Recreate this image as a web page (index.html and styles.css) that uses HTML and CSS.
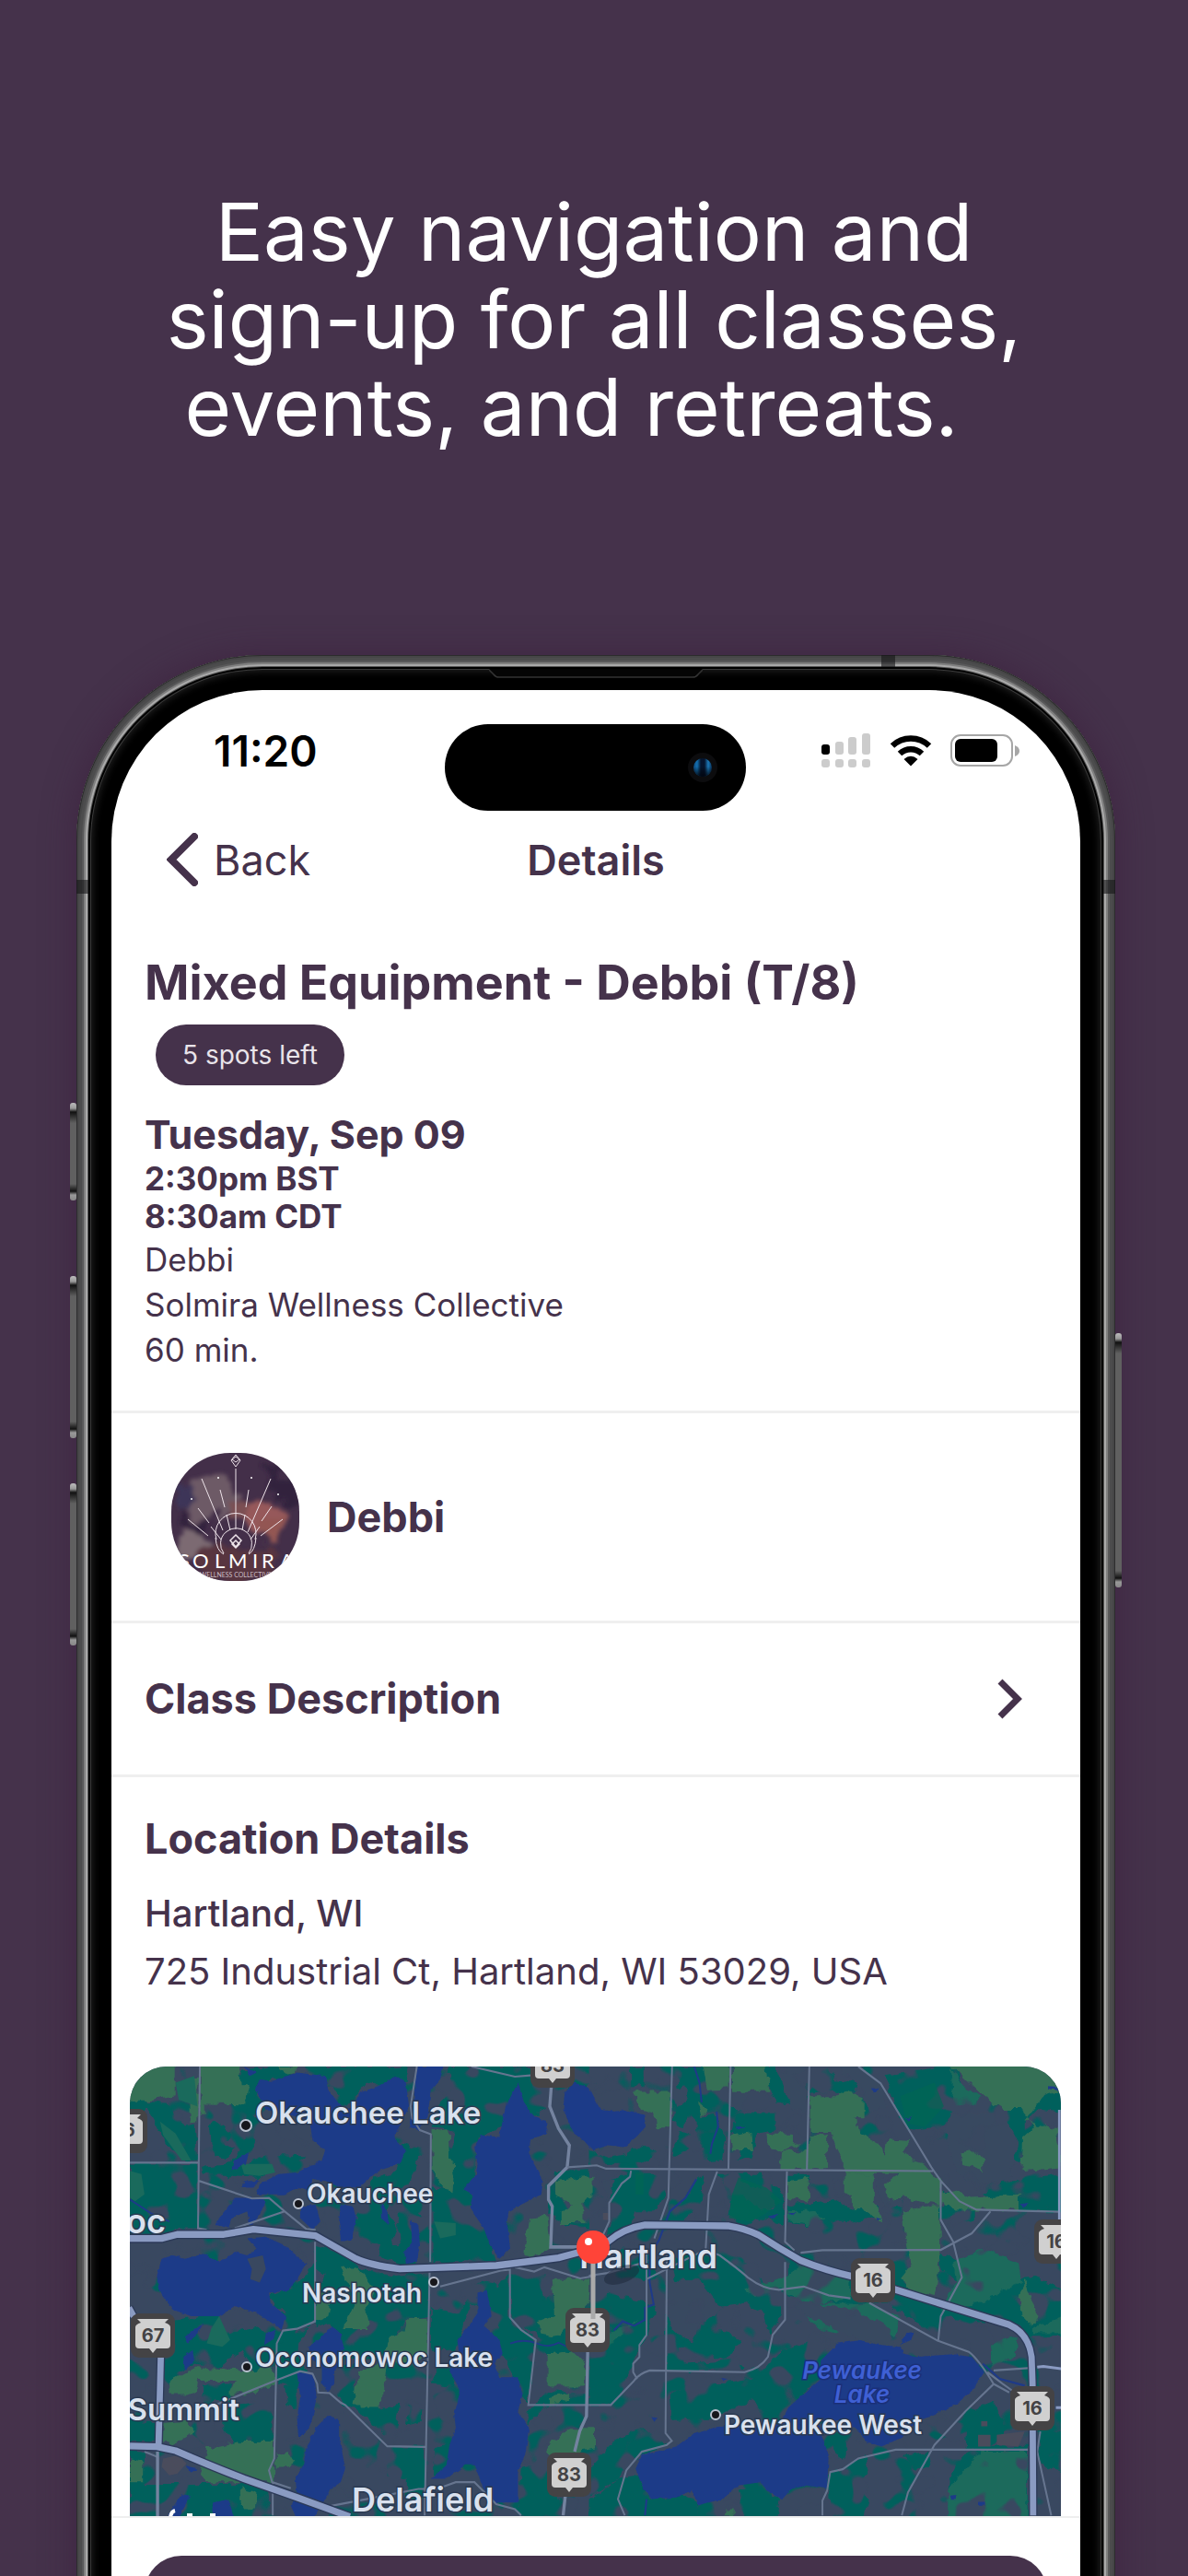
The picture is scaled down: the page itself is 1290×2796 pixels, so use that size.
FILE: index.html
```html
<!DOCTYPE html>
<html lang="en">
<head>
  <meta charset="UTF-8">
  <meta name="viewport" content="width=device-width, initial-scale=1">
  <title>Class Details | Solmira</title>
  <link rel="stylesheet" href="styles.css">
</head>
<body>
  <main class="page">
    <h1 class="headline">Easy navigation and<br>sign-up for all classes,<br>events, and retreats.&nbsp;&nbsp;</h1>

    <div class="phone">
      <span class="side-button action"></span>
      <span class="side-button volume-up"></span>
      <span class="side-button volume-down"></span>
      <span class="side-button power"></span>
      <span class="antenna antenna-top"></span>
      <span class="antenna antenna-left"></span>
      <span class="antenna antenna-right"></span>
      <svg class="speaker" viewBox="0 0 232 10"><path d="M0 0H232L227 6Q225 9 221 9H11Q7 9 5 6Z" fill="#050505"/><path d="M0 1L5 6Q7 9 11 9H221Q225 9 227 6L232 1" fill="none" stroke="#333" stroke-width="1.5"/></svg>

      <div class="screen">
        <div class="status-bar">
          <span class="time">11:20</span>
          <div class="island">
            <svg width="34" height="34" viewBox="0 0 34 34">
              <defs>
                <linearGradient id="lens"><stop offset="0" stop-color="#0d4a80"/><stop offset=".2" stop-color="#1470b0"/><stop offset=".4" stop-color="#04142e"/><stop offset=".6" stop-color="#04142e"/><stop offset=".8" stop-color="#1c78b8"/><stop offset="1" stop-color="#083058"/></linearGradient>
                <linearGradient id="lensShade" x2="0" y2="1"><stop offset=".45" stop-color="#000" stop-opacity="0"/><stop offset="1" stop-color="#000510" stop-opacity=".9"/></linearGradient>
              </defs>
              <circle cx="17" cy="17" r="16" fill="#0c0c0e"/>
              <circle cx="17" cy="17" r="10" fill="url(#lens)"/>
              <circle cx="17" cy="17" r="10" fill="url(#lensShade)"/>
            </svg>
          </div>
          <div class="status-icons">
            <svg width="54" height="38" viewBox="0 0 54 38">
              <rect x="0" y="12" width="9" height="11" rx="3"/>
              <g fill="#ccc">
                <rect x="15" y="9" width="9" height="14" rx="3"/>
                <rect x="29" y="4" width="9" height="19" rx="3"/>
                <rect x="44" y="0" width="9" height="23" rx="3"/>
                <rect x="0" y="28" width="9" height="9" rx="3"/>
                <rect x="15" y="28" width="9" height="9" rx="3"/>
                <rect x="29" y="28" width="9" height="9" rx="3"/>
                <rect x="44" y="28" width="9" height="9" rx="3"/>
              </g>
            </svg>
            <svg width="46" height="34" viewBox="0 0 46 34">
              <path d="M3 11.500A29 29 0 0 1 43 11.500M11 20A17.500 17.500 0 0 1 35 20" fill="none" stroke="#000" stroke-width="6.500"/>
              <path d="M23 33.500L15.500 26Q23 19.500 30.500 26Z"/>
            </svg>
            <svg width="75" height="36" viewBox="0 0 75 36">
              <rect x="1" y="1" width="66" height="33" rx="10" fill="#fff" stroke="#a6a6a6" stroke-width="2"/>
              <rect x="5" y="5" width="46" height="25" rx="6"/>
              <path d="M70 12Q75 14 75 18T70 24Z" fill="#a6a6a6"/>
            </svg>
          </div>
        </div>

        <nav class="nav-bar">
          <a class="back" href="#">
            <svg width="34" height="58" viewBox="0 0 34 58"><path d="M30 4L5 29L30 54" fill="none" stroke="currentColor" stroke-width="8" stroke-linecap="round" stroke-linejoin="miter"/></svg>
            Back
          </a>
          <h2 class="nav-title">Details</h2>
        </nav>

        <section class="summary">
          <h2 class="class-name">Mixed Equipment - Debbi (T/8)</h2>
          <span class="spots">5 spots left</span>
          <p class="date">Tuesday, Sep 09</p>
          <p class="hours">2:30pm BST<br>8:30am CDT</p>
          <p class="facts">Debbi<br>Solmira Wellness Collective<br>60 min.</p>
        </section>

        <section class="teacher">
          <svg class="avatar" viewBox="0 0 139 139">
            <defs>
              <filter id="soft" x="-20%" y="-20%" width="140%" height="140%">
                <feTurbulence type="fractalNoise" baseFrequency=".05" numOctaves="3" seed="4"/>
                <feDisplacementMap in="SourceGraphic" scale="26" xChannelSelector="R" yChannelSelector="G"/>
                <feGaussianBlur stdDeviation="2"/>
              </filter>
            </defs>
            <rect width="139" height="139" fill="#432f49"/>
            <g filter="url(#soft)">
              <path d="M22 30Q40 18 60 26T64 60L40 78L14 62Z" fill="#6d5a66"/>
              <path d="M4 92L30 84L48 98L40 116L6 108Z" fill="#7c6a72"/>
              <path d="M82 56L104 50L128 74L116 88L90 90Z" fill="#96585a"/>
              <path d="M4 40L24 36L20 60L4 66Z" fill="#3c3558"/>
              <path d="M100 10L136 30L134 66L112 50Z" fill="#33223d"/>
              <path d="M28 104L108 100L118 139H30Z" fill="#59343f"/>
              <path d="M10 66L40 76L30 86L8 84Z" fill="#33243c"/>
              <path d="M62 52L88 58L84 74L60 72Z" fill="#7c5053"/>
              <path d="M96 70L122 72L116 96L98 92Z" fill="#935752"/>
            </g>
            <g fill="none" stroke="#eee4ea" stroke-width="1">
              <path d="M70 17V83M33 28L56 84M108 28L83 86M53 40L58 59M84 40L81 59M29 60L41 76M109 58L98 74M18 72L40 90M121 72L97 90M60 67L64 84M80 67L77 84M43 80L54 94M96 80L86 94"/>
              <path d="M49 94A22 22 0 1 1 91 94M57 109A17 17 0 1 1 84 109M48 92Q49 106 57 110M92 92Q91 106 84 110"/>
              <path d="M70 2L75 8L70 15L65 8ZM70 4L74 7L70 10L66 7Z"/>
              <path d="M70 89L76 95L70 102L64 95ZM70 95L74 99L70 103L66 99Z" stroke-width="1.500"/>
            </g>
            <g fill="#fff"><circle cx="51" cy="27" r="1"/><circle cx="87" cy="27" r="1"/><circle cx="116" cy="45" r="1"/><circle cx="22" cy="50" r="1"/></g>
            <text class="avatar-name" y="125" x="8 23 47 62 88 98 118">SOLMIRA</text>
            <text class="avatar-sub" x="70" y="135" text-anchor="middle">WELLNESS COLLECTIVE</text>
          </svg>
          <h3 class="section-title">Debbi</h3>
        </section>

        <a class="description" href="#">
          <span class="section-title">Class Description</span>
          <svg width="28" height="44" viewBox="0 0 28 44"><path d="M3 3L22 22L3 41" fill="none" stroke="currentColor" stroke-width="7"/></svg>
        </a>

        <section class="location">
          <h3 class="section-title">Location Details</h3>
          <address>
            <p class="city">Hartland, WI</p>
            <p>725 Industrial Ct, Hartland, WI 53029, USA</p>
          </address>
        </section>

        <svg class="map" viewBox="0 0 1011 488" preserveAspectRatio="xMidYMin slice" role="img" aria-label="Map of Hartland">
          <defs>
            <g id="shield">
              <rect x="-24" y="-24" width="48" height="48" rx="9" fill="#444345"/>
              <path d="M-17 -18H17L13 -14Q19 -12 19 -9V10Q19 14 15 14H4L0 19L-4 14H-15Q-19 14 -19 10V-9Q-19 -12 -13 -14Z" fill="#d0d0d0"/>
            </g>
            <!-- ragged field and shore edges -->
            <filter id="ragged" x="0" y="0" width="100%" height="100%">
              <feTurbulence type="fractalNoise" baseFrequency=".035" numOctaves="2" seed="7"/>
              <feDisplacementMap in="SourceGraphic" scale="26" xChannelSelector="R" yChannelSelector="G"/>
            </filter>
            <filter id="shore" x="0" y="0" width="100%" height="100%">
              <feTurbulence type="fractalNoise" baseFrequency=".06" numOctaves="2" seed="3"/>
              <feDisplacementMap in="SourceGraphic" scale="10" xChannelSelector="R" yChannelSelector="G"/>
            </filter>
            <!-- scattered small fields -->
            <filter id="fields" x="0" y="0" width="100%" height="100%" color-interpolation-filters="sRGB">
              <feTurbulence type="fractalNoise" baseFrequency=".03 .034" numOctaves="2" seed="12"/>
              <feColorMatrix values="0 0 0 0 0  0 0 0 0 0  0 0 0 0 0  14 0 0 0 -8.300"/>
              <feComposite in="SourceGraphic" operator="in"/>
            </filter>
            <filter id="groves" x="0" y="0" width="100%" height="100%" color-interpolation-filters="sRGB">
              <feTurbulence type="fractalNoise" baseFrequency=".028 .032" numOctaves="2" seed="31"/>
              <feColorMatrix values="0 0 0 0 0  0 0 0 0 0  0 0 0 0 0  14 0 0 0 -8.300"/>
              <feComposite in="SourceGraphic" operator="in"/>
            </filter>
            <path id="highway" d="M63 570H165L215 558H365L460 543L660 562L790 630Q830 648 930 660L1240 650L1440 627L1530 605L1598 580Q1650 540 1718 530L1988 533Q2040 540 2083 560Q2150 600 2218 635Q2300 665 2388 683L2888 825Q2950 850 2960 920L2963 1000L2965 1388M63 1183L150 1185L210 1197Q330 1245 430 1280L600 1335L770 1392M163 900L155 1185M60 775L75 800"/>
          </defs>
          <rect width="1011" height="488" fill="#394860"/>
          <rect width="1011" height="488" fill="#00605c" filter="url(#groves)"/>
          <g transform="matrix(.338 0 0 .3674 -21.3 -22.8)">
            <!-- woodland -->
            <g fill="#00605c" filter="url(#ragged)">
              <path d="M63 350L280 348V540H230L180 560L63 560ZM110 165L180 170L240 240L272 235L280 345L250 340L190 300L120 190ZM63 160L110 160L130 180L100 200L63 190Z"/>
              <path d="M440 190L475 215L465 290L440 330L400 340L390 385L380 390L395 335L430 290ZM290 355L440 345L520 320L630 325L600 345L530 360L500 390L420 385L300 380ZM320 235L350 225L370 250L390 265L365 290L400 300L375 335L340 325L325 290Z"/>
              <path d="M420 75L520 62H960L950 110L900 120L820 110L760 180L720 120L600 90L520 100L440 180L420 130Z"/>
              <path d="M1090 62H1350L1410 130L1400 190L1180 270L1170 380L1150 430L1210 520L1240 640H1035V420L1100 425V255L1080 245L1035 240L1060 170L1090 140Z"/>
              <path d="M940 290L1015 310L985 350L960 410L900 430L890 480L920 540L900 595L800 580L790 480L820 430L850 390L920 370Z"/>
              <path d="M920 490L960 480L1025 520V640L940 645L860 625L870 590L930 590Z"/>
              <path d="M660 590L740 610L800 660L920 680L1025 670V800L960 810L920 850L880 930L760 920L740 860L700 820L660 830V720L690 680L660 660ZM500 740L600 710L655 640V815L610 840L550 860L500 800L560 790Z"/>
              <path d="M1030 770L1120 790L1180 700L1250 710L1280 670V800L1350 850L1370 880L1340 1060L1250 900L1240 800L1160 760L1110 900H1030Z"/>
              <path d="M1285 670H1400L1390 760L1440 720L1480 780V900L1410 930L1380 860L1290 800Z"/>
              <path d="M180 820L290 800L330 770L380 850L480 830L535 880L530 950L460 960L420 900L350 950L270 940L190 980ZM300 1000H390V1050H330L300 1080ZM360 1070L520 1050V1180L410 1190L360 1130Z"/>
              <path d="M640 830L600 900L640 980L600 1010L540 1000L545 880ZM740 950L800 940L780 1010L870 1070L930 1060L920 1130L880 1150L830 1100L750 1060L720 1000Z"/>
              <path d="M890 1185H1010V1340H950V1280L890 1270ZM1040 1190L1110 1170L1090 1250L1040 1270ZM960 1060L1005 1070L1000 1110L950 1120ZM1050 960L1110 940L1100 1005L1030 1000ZM1340 1080L1410 1020L1530 1030V1060H1400L1340 1120Z"/>
              <path d="M63 1195L110 1200L100 1290H63ZM63 1295H500L520 1400H63ZM1320 1245L1400 1235L1410 1310L1450 1340V1400H1250L1310 1360ZM63 1115H150V1170H63ZM200 1110L250 1140L220 1160ZM560 1010L595 1000L600 1070L570 1060ZM1470 52L1538 52V110L1500 180L1470 150ZM1430 370L1538 365V540L1470 530L1410 500L1415 420Z"/>
            </g>
            <g transform="translate(1538 0)">
              <g fill="#00605c" filter="url(#ragged)">
                <path d="M280 62H370L380 130L360 210L400 200L440 270L430 340L390 345L370 300L340 290L350 230L320 200L300 240L270 220L290 150ZM500 62H600L650 120V175L600 170L580 120L480 90ZM135 62H175V120H135ZM480 200H600V250L540 260L520 330L480 340L490 290L450 250ZM0 310L60 330L110 320L180 290L220 320L170 350L0 350ZM290 255L330 262L335 300L270 330L280 280Z"/>
                <path d="M50 410L110 380H240L250 450L210 490L150 490L130 545L60 560L80 480ZM410 380H550L625 440V530L560 510L500 530L450 500L460 430ZM340 400L370 380L360 470L300 520L240 530L300 460ZM640 380H710V400H640Z"/>
                <path d="M640 470L800 460L840 480L930 480L930 500L850 520L740 515L700 530L640 525ZM705 140L760 52L790 100L870 110L850 150L780 135ZM950 90L1180 52L1200 130L1140 240L1020 250L980 180ZM1350 140L1440 100L1520 140V200L1440 190L1400 230V350L1370 340L1340 230ZM1140 430L1180 440L1240 470V520L1140 500ZM1380 400L1520 380V490H1380L1260 440L1330 400ZM760 170H800V210H740Z"/>
                <path d="M60 730L220 770L180 860L130 960L90 1060H0V900L70 870ZM100 600H180L220 680L180 700L110 660ZM260 640L330 610L500 640L560 700L620 720V800L580 850L560 790L500 760L420 770L360 700L280 690ZM250 800L290 820L280 870L330 880L290 900L310 940L470 930L500 960H250ZM360 830L450 850L490 870L440 930L360 900Z"/>
                <path d="M640 600L750 640L840 690L1000 700L1080 760L1250 760L1280 700L1430 680L1520 720V860L1430 860L1380 830L1130 800L1100 850L960 760L800 760L640 740ZM1130 610L1190 640V700L1130 660ZM1200 720L1330 700L1320 720L1200 730Z"/>
                <path d="M260 1030L330 990L420 1000L540 980L620 900L700 880L770 910L780 950L620 1090L560 1080L520 1050L400 1100L270 1110ZM170 1130L260 1180L200 1200L110 1240L100 1280L0 1330V1250L90 1160ZM100 1280L170 1270L190 1340L310 1330L350 1350V1400H0V1340ZM770 1130L830 1180L820 1230L790 1210ZM770 1270L890 1210L900 1260L850 1290L900 1340L880 1400H780ZM1010 1210L1090 1200L1100 1240L1050 1250ZM1180 1240L1240 1180H1410V1400H1150L1160 1280ZM1220 1080L1300 1050L1340 1130L1330 1160L1270 1190H1210ZM1440 1130L1520 1140V1260L1450 1240ZM480 1310L560 1300L610 1340L600 1400H500Z"/>
              </g>
              <g fill="#1a6a5c" filter="url(#ragged)">
                <path d="M500 720L640 680L700 640L840 690V750L700 760L620 720L530 740ZM740 840L800 850L840 800L980 860L1000 800L900 760H640L620 720ZM1170 640L1260 600L1380 640L1390 700L1230 770L1130 780L1180 700ZM1160 52L1200 120L1260 150L1230 180H1160L1170 120ZM1430 830L1520 800V850H1430ZM1290 880L1380 860L1370 920L1300 950ZM1180 1280L1260 1200H1408V1400H1150V1320ZM640 490L700 485L760 510L700 528L640 520ZM0 880L160 810L60 890L0 900ZM1200 260L1260 290V340L1210 310Z"/>
              </g>
              <path d="M270 130L310 120L320 160L280 190ZM480 80L530 130L500 190H450L460 110ZM600 62L700 62V200L650 190ZM1160 200L1330 200L1380 290L1350 400L1250 410L1180 380L1140 250ZM800 62H870L940 110L960 180L900 200L880 130ZM80 400L60 470L40 390ZM250 700L350 690L430 780L350 830L330 880L260 830ZM640 750L840 780L960 830L980 890L870 870L700 800ZM920 400L960 390L1010 470L950 480ZM480 400L560 430L600 470L560 490L490 440Z" fill="#394860" filter="url(#ragged)"/>
            </g>
          </g>
          <rect width="1011" height="488" fill="#394860" filter="url(#fields)"/>
          <g transform="matrix(.338 0 0 .3674 -21.3 -22.8)">
            <!-- parks -->
            <g fill="#357057" filter="url(#ragged)">
              <path d="M75 52L210 54V150L120 165L63 165V110ZM290 54H415L420 120H450L435 175L305 172V200H290ZM257 95H283V230H257ZM540 64H610L600 80L570 85ZM1035 250L1085 245L1090 340L1105 345L1100 430L1070 420L1035 370Z"/>
              <path d="M740 650L800 665L850 720L820 780L830 835H750L770 790L790 750L760 700ZM660 730L715 740L700 800L660 815ZM960 805H1020V910L990 935L890 930L870 1065H780L800 960L860 940L910 860L950 840Z"/>
              <path d="M180 1010L200 990L280 950L440 960L525 950V1000L440 1030L380 1030L400 990H280L270 1030H190ZM170 1115L240 1110L270 1140L230 1160L200 1180L165 1170ZM310 1190L420 1170L525 1170V1290H310L290 1270ZM530 1210L570 1200L590 1230L560 1245H530ZM63 1220L105 1230V1290H63ZM420 1305L470 1320L465 1370L430 1370L415 1340Z"/>
              <path d="M1345 510L1405 505L1415 600L1370 625L1325 620ZM1430 400L1550 385V440L1520 470V525L1450 525V495L1480 470L1430 440ZM1405 910L1480 900L1525 940V1005H1405ZM1420 690L1540 690V740L1530 770L1440 860L1380 850L1375 820L1430 800ZM1410 1040L1480 1025L1480 1050L1410 1060ZM1410 1175L1480 1130H1560V1190L1500 1200L1460 1240L1400 1200Z"/>
            </g>
            <g fill="#1a6a5c">
              <path d="M160 225L210 260L260 340L230 340L170 265ZM63 370L100 380L110 440L80 460L63 450ZM270 90L280 180L220 160L210 110ZM420 350L520 350L530 375L480 385L430 380ZM1040 520L1110 525V560L1060 570ZM325 835L350 800L385 870L360 890L310 880Z"/>
            </g>
            <path d="M170 1220L220 1210L245 1235L215 1265L190 1270L165 1245Z" fill="#4a4c5c"/>
            <g transform="translate(1538 0)">
              <g fill="#357057" filter="url(#ragged)">
                <path d="M365 52H450V125L380 130ZM460 52H565L580 135H460ZM140 137H265V245H215L210 200L170 190ZM710 150H800L820 135L885 150V210H855L870 260L930 290L950 320L1080 350L1130 400V470L1060 460L1010 450L960 455L950 410L1000 380H820V345L790 290L780 255H710ZM710 270L765 260V365H615L620 310L705 315ZM960 275L1030 280L1010 310L1040 340L1020 360L950 320ZM455 270L520 255L525 310L460 310ZM570 260H655V285L685 290L620 310L575 300Z"/>
                <path d="M1160 52L1480 54L1520 130L1460 150L1400 220L1500 250L1520 360L1390 370L1395 270L1430 240L1390 190L1330 190L1270 150ZM1195 320L1240 310L1265 340V370L1200 350ZM1110 440L1180 430L1230 450L1380 440V485L1250 485H1180L1140 470ZM820 380L915 378V470L945 500L935 530L905 490L850 485L850 440H820ZM640 400L705 390V460L640 450ZM1010 490L1125 470L1130 620L1110 740L1020 720L1000 690L1035 650L1015 560ZM1400 690L1420 750L1450 800L1420 830L1390 800L1385 740Z"/>
                <path d="M350 170L380 190L365 210ZM440 1370L465 1370V1388H430Z"/>
              </g>
              <path d="M480 390L570 420L620 460L560 500L520 520L450 510L460 440ZM150 375H175V440H150ZM1000 150L1110 110L1140 180L1080 240L1020 230Z" fill="#006654" opacity=".7"/>
              <path d="M1250 1150H1290V1185H1250ZM1310 1150L1400 1140L1380 1185L1310 1180ZM45 495H62V515H45ZM1260 1110H1280V1125H1260Z" fill="#4a4c5c"/>
            </g>
            <!-- water -->
            <g fill="#1e3a88" filter="url(#shore)">
              <path d="M465 130L480 100L520 105L600 80L690 90L700 130L750 190L790 180L800 140L860 120L920 90L950 110L960 180L930 240L910 270L950 310L930 350L860 370L800 420L740 420L690 400L650 395L640 430L600 420L560 440L470 440L480 410L540 380L600 375L680 340L690 310L650 280L640 220L500 190Z"/>
              <path d="M985 62H1070L1060 100L1030 130L1020 210L990 250L960 240L975 160ZM430 62L470 80L450 90ZM400 340L445 315L435 350L390 370ZM350 510L400 450L470 450L500 460L480 500L450 540L440 490L390 510L380 540L340 530ZM430 400L480 400L460 420L425 420Z"/>
              <path d="M1310 110L1330 170L1350 200L1405 230L1400 260L1350 280L1345 320L1390 400L1385 440L1320 470L1280 490L1275 520L1285 600L1250 630L1220 590L1200 540L1155 480L1165 440L1135 425L1175 380L1180 350L1170 300L1190 265L1250 270L1270 180Z"/>
              <path d="M1460 140L1490 110L1540 125L1575 190L1620 195L1655 190L1715 205L1720 240L1690 270L1650 300L1600 295L1550 310L1520 280L1490 260L1455 190Z"/>
              <path d="M165 630L200 620L240 630L300 615L350 640L400 610L440 620L470 600L440 570L500 565L560 590L630 645L600 690L570 725L510 730L515 760L565 800L550 840L520 820L470 790L400 770L350 800L260 800L200 780L155 720L150 680Z"/>
              <path d="M740 470L780 475L790 510L775 575H740L735 520ZM965 515L990 530L995 590L985 640L950 645L945 610L970 580ZM610 475L660 470L675 520L650 545L610 510ZM870 465L890 490L895 530L870 510Z"/>
              <path d="M710 828L740 850L750 890L740 940L720 960V1000L700 1020L680 1000L680 950L640 920L635 890L670 870ZM600 965L650 970L665 1030L650 1100L640 1130L605 1160L600 1100L610 1040Z"/>
              <path d="M700 1092L735 1105L735 1160L745 1200L755 1250L740 1290L710 1310L690 1340L650 1400H600L580 1360L600 1330L595 1280L620 1240L630 1190L660 1130Z"/>
              <path d="M1180 730L1210 722L1225 800L1200 830L1250 870L1260 910L1235 935L1250 980L1310 980L1325 1030L1310 1080L1345 1130L1335 1200L1310 1260L1310 1350L1240 1350L1200 1310L1170 1240L1140 1240L1080 1280L1030 1280L1080 1240L1090 1180L1110 1130L1105 1090L1125 1020L1090 960L1120 910L1115 870L1150 830L1180 790Z"/>
              <path d="M265 900L270 930L240 960L235 920ZM330 1350L380 1340L400 1400H325ZM230 1325L255 1330L220 1400H175ZM240 1240L280 1250L260 1262ZM240 860L300 820L280 850L250 880ZM500 850L535 840L520 870L495 885Z"/>
            </g>
            <path d="M440 630L490 620L500 660L480 700L450 690L455 660Z" fill="#394860"/>
            <path d="M1285 880Q1330 865 1370 880T1440 878L1480 895M63 455L130 495L190 520" fill="none" stroke="#1e3a88" stroke-width="5"/>
            <g transform="translate(1538 0)">
              <g fill="#1e3a88" filter="url(#shore)">
                <path d="M745 930L800 880L860 872L940 885L1000 890L1010 910L1050 920L1170 912L1230 920L1270 965L1230 1020L1180 1060L1120 1085L1060 1110L1000 1160L940 1185L890 1170L870 1140L820 1110L750 1110L690 1125H610L640 1070L700 1020L740 990Z"/>
                <path d="M280 1185L330 1150L400 1130L440 1120L740 1120L755 1170L770 1210L765 1310L700 1300L650 1310L620 1342L580 1320L550 1290L480 1300L430 1340L350 1358L330 1315L280 1335L200 1340L170 1300L150 1250L170 1210Z"/>
                <path d="M1020 850L1045 845L1035 870L1000 885ZM910 125L930 130L915 140ZM1015 215L1038 212L1025 225ZM1385 468L1412 465L1395 480ZM575 505L610 497L590 512ZM640 495L665 495L655 502ZM1475 120L1505 122V132L1475 128ZM920 505L940 510L925 518ZM1160 1330L1180 1328L1178 1342H1160ZM1250 1348H1272V1360H1250ZM470 240L505 238L480 248ZM200 1098L220 1100L210 1112ZM425 982L445 985L435 994Z"/>
              </g>
              <path d="M338 62L355 110L362 168M410 195L415 240L395 290L390 320M345 395L310 450L260 490L225 575L195 620V700L208 765L180 775V810L145 828L108 815L80 842M185 1340L180 1388M1265 940L1320 985L1400 1005" fill="none" stroke="#1e3a88" stroke-width="6"/>
            </g>

            <!-- minor roads -->
            <g fill="none" stroke="#66758f" stroke-width="6">
              <path d="M288 62L282 540L310 545M63 346H282M285 400L455 452L510 450L560 490L630 542L660 545M400 540L560 490M658 580V815L600 837L555 842L535 880L527 1220L510 1255L520 1290L580 1308M522 1290V1388"/>
              <path d="M330 1065L530 990L610 962L650 970L665 1000L668 1025L705 1027L740 1055L755 1062L890 1184L1012 1186M1030 260L1028 640M1026 670L1010 1388M985 62L965 180L970 215L995 250L1030 262M1060 712L1255 665L1284 662V803L1320 840L1367 870L1343 1062H1538M1300 655L1362 668L1395 655L1510 688L1560 680M1160 62L1300 92L1350 88M710 1360L880 1330L990 1310H1050L1110 1290L1170 1290L1240 1355L1300 1370L1320 1388M110 1200L150 1215"/>
            </g>
            <path d="M1417 120L1412 180L1440 245L1475 295L1468 360L1408 415V455L1420 475L1415 595H1510M1534 900L1530 1095L1508 1140L1492 1200M1462 1330L1455 1388M152 1200V1400" fill="none" stroke="#74839f" stroke-width="10"/>
            <g transform="translate(1538 0)" fill="none" stroke="#66758f" stroke-width="6">
              <path d="M-70 360L25 354L55 364L1105 371M267 62L255 450L210 570M455 62L448 365M708 62L700 368M865 62L937 112L1100 360L1132 402L1190 460L1245 485L1513 491M636 372L630 580L660 605M135 370L132 388L105 408L65 465V520L45 560M412 372L385 440L375 600M1130 400V515L1170 580L1198 685L1130 800L1122 872M1290 490L1230 555L1130 604L750 605L680 612M185 690L375 603L420 620Q480 660 510 685Q560 720 610 722L690 712L770 738L840 747"/>
              <path d="M630 640V810L590 855L575 920Q550 955 500 965L195 960Q160 970 145 990L70 1062H0M185 610V855L162 885V920L142 940V965L155 985M250 620L246 1145L266 1168L250 1180L170 1200L120 1255L93 1340L115 1388M900 760L1120 872L1220 905Q1250 925 1300 1000L1350 1025M1300 960L1410 953M1300 1000L1210 1080L1110 1180L1025 1320L1005 1388M1280 965L1330 1000L1360 1020M750 1388V1345L765 1315L775 1260L815 1252L865 1220L985 1194H1410M1450 1140L1440 1200L1485 1388M0 680L60 672L180 640"/>
              <path d="M1440 950L1460 948L1520 955M1511 190V540M1500 1070H1520" stroke="#8a9bc2" stroke-width="8"/>
            </g>

            <!-- highways -->
            <g fill="none" stroke-linejoin="round">
              <use href="#highway" stroke="#2c3a58" stroke-width="28"/>
              <use href="#highway" stroke="#8a9bc2" stroke-width="20"/>
            </g>
          </g>

          <g class="route">
            <use href="#shield" x="-5" y="70"/><text x="-5" y="76">16</text>
            <use href="#shield" x="25" y="292"/><text x="25" y="299">67</text>
            <use href="#shield" x="459" y="-1"/><text x="459" y="6">83</text>
            <use href="#shield" x="497" y="286"/><text x="497" y="293">83</text>
            <use href="#shield" x="477" y="443"/><text x="477" y="450">83</text>
            <use href="#shield" x="807" y="232"/><text x="807" y="239">16</text>
            <use href="#shield" x="980" y="371"/><text x="980" y="378">16</text>
            <use href="#shield" x="1006" y="190"/><text x="1006" y="197">16</text>
          </g>

          <g class="town-dots">
            <circle cx="126" cy="64" r="6"/>
            <circle cx="183" cy="149" r="5"/>
            <circle cx="330" cy="234" r="5"/>
            <circle cx="127" cy="326" r="5"/>
            <circle cx="636" cy="378" r="5"/>
          </g>
          <g class="place">
            <text class="large" x="39" y="181" text-anchor="end">Oconomowoc</text>
            <text class="medium" x="136" y="62">Okauchee Lake</text>
            <text class="small" x="192" y="148">Okauchee</text>
            <text class="small" x="187" y="256">Nashotah</text>
            <text class="small" x="136" y="326">Oconomowoc Lake</text>
            <text class="medium" x="119" y="384" text-anchor="end">Summit</text>
            <text class="large" x="241" y="483">Delafield</text>
            <text class="large" x="638" y="219" text-anchor="end">Hartland</text>
            <text class="small" x="645" y="399">Pewaukee West</text>
            <text class="lake" x="795" y="339">Pewaukee</text>
            <text class="lake" x="795" y="365">Lake</text>
          </g>
          <path d="M44 489Q45 483 49 482M62 487H68M87 487H93" fill="none" stroke="#fff" stroke-width="4"/>

          <!-- pin -->
          <ellipse cx="534" cy="226" rx="20" ry="9" fill="#1c2638" opacity=".5" transform="rotate(-20 534 226)"/>
          <path d="M503 212V274" stroke="#aaa" stroke-width="5"/>
          <circle cx="503" cy="196" r="18" fill="#ff4438"/>
          <circle cx="498" cy="190" r="4" fill="#fff"/>
        </svg>

        <div class="action-bar">
          <button class="cta" type="button" aria-label="Sign up"></button>
        </div>
      </div>
    </div>
  </main>
</body>
</html>
```

FILE: styles.css
```css
* {
  box-sizing: border-box;
  margin: 0;
}
body {
  background: #45324b;
  color: #45324b;
  font-family: Inter, "Noto Sans", sans-serif;
}
a {
  color: inherit;
  text-decoration: none;
}
.page {
  height: 100vh;
  overflow: hidden;
  padding-top: 204px;
}
.headline {
  color: #fff;
  font-size: 87px;
  font-weight: 400;
  line-height: 95px;
  text-align: center;
  margin-bottom: 222px;
}

/* phone body */
.phone {
  position: relative;
  margin: 0 79px 0 83px;
  padding: 38px;
  border-radius: 202px 202px 0 0;
  background: #000;
  box-shadow:
    inset 0 0 0 1px #2c2c2d,
    inset 0 0 0 3px #464647,
    inset 0 0 0 6px #4c4c4d,
    inset 0 0 0 8px #59595a,
    inset 0 0 0 10px #808080,
    inset 0 0 0 12px #a9a9a9,
    inset 0 0 0 13px #555,
    inset 0 0 0 15px #000,
    inset 0 0 0 16px #3a3a3a,
    inset 0 0 8px 17px #242424,
    0 0 36px rgba(58, 28, 58, 0.6);
}
.side-button {
  position: absolute;
  width: 7px;
  border-radius: 3px;
  background: linear-gradient(#bbb 0, #999 6px, #111 10px, #606060 22px, #606060 calc(100% - 18px), #111 calc(100% - 10px), #999 calc(100% - 6px), #888 100%);
}
.action { left: -7px; top: 486px; height: 106px; }
.volume-up { left: -7px; top: 674px; height: 176px; }
.volume-down { left: -7px; top: 899px; height: 176px; }
.power { right: -7px; top: 736px; height: 276px; }
.antenna {
  position: absolute;
  background: rgba(20, 20, 22, 0.6);
}
.antenna-top { top: 0; right: 239px; width: 15px; height: 13px; }
.antenna-left { left: 0; top: 244px; width: 13px; height: 15px; }
.antenna-right { right: 0; top: 244px; width: 13px; height: 15px; }
.speaker {
  position: absolute;
  top: 15px;
  left: 50%;
  width: 232px;
  height: 10px;
  margin-left: -116px;
}
.screen {
  background: #fff;
  border-radius: 164px 164px 0 0;
  overflow: hidden;
}

/* status bar */
.status-bar {
  display: grid;
  grid-template-columns: 1fr auto 1fr;
  padding: 37px 66px 0 111px;
  color: #000;
}
.time {
  font-size: 46px;
  font-weight: 600;
  line-height: 58px;
}
.island {
  display: flex;
  align-items: center;
  justify-content: flex-end;
  width: 327px;
  height: 94px;
  margin-right: 46px;
  padding-right: 30px;
  border-radius: 47px;
  background: #000;
}
.status-icons {
  display: flex;
  align-items: center;
  justify-content: flex-end;
  gap: 20px;
  height: 58px;
}

/* nav */
.nav-bar {
  display: grid;
  grid-template-columns: 1fr auto 1fr;
  align-items: center;
  height: 106px;
  padding: 0 60px;
}
.back {
  display: flex;
  align-items: center;
  gap: 17px;
  font-size: 45px;
}
.nav-title {
  font-size: 45px;
  font-weight: 600;
}

/* class summary */
.summary {
  padding: 49px 36px 41px;
  border-bottom: 3px solid #efefef;
}
.class-name {
  font-size: 52px;
  font-weight: 700;
  line-height: 64px;
}
.spots {
  display: inline-block;
  margin: 13px 0 27px 12px;
  padding: 0 29px;
  border-radius: 33px;
  background: #45324b;
  color: #e9e4ea;
  font-size: 28px;
  line-height: 66px;
  vertical-align: top;
}
.date {
  font-size: 43px;
  font-weight: 700;
  line-height: 52px;
}
.hours {
  margin: 2px 0;
  font-size: 35px;
  font-weight: 700;
  line-height: 41px;
}
.facts {
  font-size: 35px;
  line-height: 49px;
}

.section-title {
  font-size: 45px;
  font-weight: 700;
  line-height: 56px;
}
.teacher {
  display: flex;
  align-items: center;
  gap: 30px;
  padding: 43px 65px;
  border-bottom: 3px solid #efefef;
}
.avatar {
  width: 139px;
  height: 139px;
  border-radius: 64px;
}
.avatar-name {
  fill: #fff;
  font-family: Lato, sans-serif;
  font-size: 22px;
}
.avatar-sub {
  fill: #c9bcc6;
  font-family: Lato, sans-serif;
  font-size: 7px;
}
.description {
  display: flex;
  align-items: center;
  justify-content: space-between;
  padding: 54px 62px 54px 36px;
  border-bottom: 3px solid #efefef;
}
.location {
  padding: 39px 36px 72px;
}
address {
  margin-top: 21px;
  font-size: 40px;
  font-style: normal;
  line-height: 63px;
}
.city {
  font-weight: 500;
}

/* map */
.map {
  display: block;
  width: calc(100% - 41px);
  height: 488px;
  margin: 0 21px 0 20px;
  border-radius: 40px 40px 0 0;
}
.route text {
  fill: #444345;
  font-size: 20px;
  font-weight: 700;
  text-anchor: middle;
}
.town-dots circle {
  fill: #17171c;
  stroke: #b9c2d0;
  stroke-width: 2px;
}
.place {
  fill: #d9e1ee;
  font-weight: 600;
  paint-order: stroke;
  stroke: #2b3a52;
  stroke-width: 3px;
}
.large { font-size: 36px; }
.medium { font-size: 33px; }
.small { font-size: 28px; }
.lake {
  fill: #3f60d4;
  stroke: #1a2f78;
  font-size: 26px;
  font-style: italic;
  text-anchor: middle;
}

.action-bar {
  padding: 41px 36px;
  border-top: 2px solid #efefef;
}
.cta {
  display: block;
  width: 100%;
  height: 150px;
  border: none;
  border-radius: 40px;
  background: #45324b;
}
```
